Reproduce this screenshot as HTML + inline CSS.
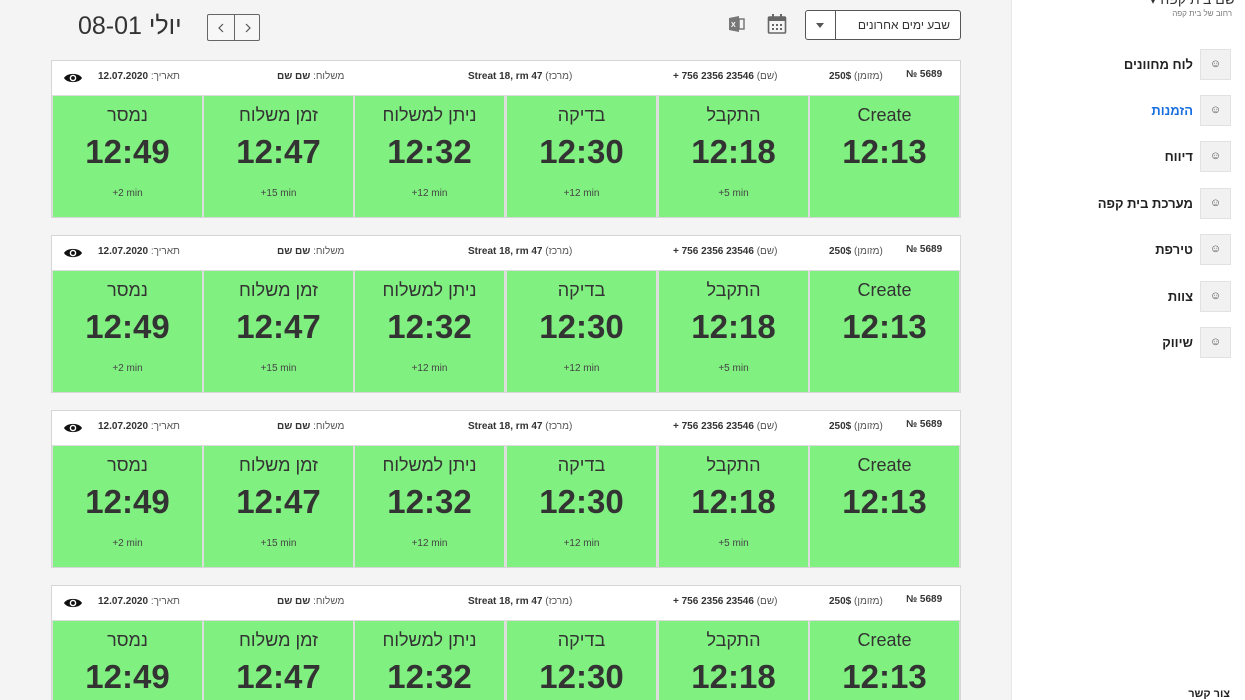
<!DOCTYPE html>
<html style="overflow:hidden;height:700px"><head><meta charset="utf-8">
<style>
*{margin:0;padding:0;box-sizing:border-box}
body{width:1245px;height:700px;overflow:hidden;background:#f4f4f4;font-family:"Liberation Sans","Noto Sans CJK JP",sans-serif;color:#333;position:relative}
.side{position:absolute;left:1011px;top:0;width:234px;height:700px;background:#fff;border-left:1px solid #e8e8e8}
.abs{position:absolute}
.card{position:absolute;left:51px;width:910px;height:158px;background:#ddd;border:1px solid #d6d6d6;overflow:hidden}
.hdr{position:absolute;left:0;top:0;width:908px;height:34px;background:#fff;font-size:10px;color:#555}
.hdr span{position:absolute;top:10px;white-space:nowrap;direction:rtl}
.hdr b{color:#333;unicode-bidi:isolate;direction:ltr}
.cell{position:absolute;top:35px;width:149px;height:121px;background:#80f080;text-align:center}
.cell .l{position:absolute;left:0;right:0;top:9px;font-size:18px;color:#333}
.cell .t{position:absolute;left:0;right:0;top:37px;font-size:33px;font-weight:bold;color:#333}
.cell .m{position:absolute;left:0;right:0;top:92px;font-size:10px;color:#444}
.mi{position:absolute;right:14px;width:31px;height:31px;background:#f1f1f1;border:1px solid #e2e2e2;font-size:11px;text-align:center;line-height:29px;color:#444}
.ml{position:absolute;right:52px;font-size:13px;font-weight:bold;color:#222;direction:rtl;white-space:nowrap}
</style></head><body>

<div class="abs" style="left:78px;top:12px;font-size:25px;color:#333;white-space:nowrap">08-01 יולי</div>
<div class="abs" style="left:207px;top:14px;width:53px;height:27px;border:1px solid #666;border-radius:2px;background:#f7f7f7">
 <div class="abs" style="left:26px;top:0;width:1px;height:25px;background:#666"></div>
 <svg class="abs" style="left:9px;top:8px" width="8" height="10" viewBox="0 0 8 10"><path d="M6 1L2 5l4 4" fill="none" stroke="#555" stroke-width="1.2"/></svg>
 <svg class="abs" style="left:36px;top:8px" width="8" height="10" viewBox="0 0 8 10"><path d="M2 1l4 4-4 4" fill="none" stroke="#555" stroke-width="1.2"/></svg>
</div>
<svg class="abs" style="left:728px;top:15px" width="18" height="18" viewBox="0 0 18 18"><path d="M1 3l10-2v16L1 15z" fill="#777"/><rect x="11" y="4" width="5" height="10" fill="none" stroke="#777" stroke-width="1.5"/><text x="3" y="12" font-size="7" fill="#fff" font-family="Liberation Sans" font-weight="bold">X</text></svg>
<svg class="abs" style="left:767px;top:13px" width="20" height="22" viewBox="0 0 20 22"><rect x="1.5" y="4" width="17" height="16" rx="1" fill="none" stroke="#666" stroke-width="1.6"/><rect x="1.5" y="4" width="17" height="4" fill="#666"/><rect x="5" y="1" width="2" height="5" fill="#666"/><rect x="13" y="1" width="2" height="5" fill="#666"/><g fill="#666"><rect x="5" y="11" width="2" height="2"/><rect x="9" y="11" width="2" height="2"/><rect x="13" y="11" width="2" height="2"/><rect x="5" y="15" width="2" height="2"/><rect x="9" y="15" width="2" height="2"/><rect x="13" y="15" width="2" height="2"/></g></svg>
<div class="abs" style="left:805px;top:10px;width:156px;height:30px;border:1px solid #555;border-radius:3px;background:#fff">
 <div class="abs" style="left:29px;top:0;width:1px;height:28px;background:#555"></div>
 <div class="abs" style="left:10px;top:12px;width:0;height:0;border-left:4px solid transparent;border-right:4px solid transparent;border-top:5px solid #555"></div>
 <div class="abs" style="right:10px;top:7px;font-size:12px;color:#333;direction:rtl;white-space:nowrap">שבע ימים אחרונים</div>
</div>

<div class="card" style="top:60px">
 <div class="hdr">
  <svg style="position:absolute;left:11px;top:10px" width="20" height="14" viewBox="0 0 20 14"><path d="M1 7C4 1.5 16 1.5 19 7C16 12.5 4 12.5 1 7z" fill="#111"/><circle cx="10" cy="7" r="3.3" fill="#fff"/><circle cx="10" cy="7" r="1.9" fill="#111"/></svg>
  <span style="left:46px">תאריך: <b>12.07.2020</b></span>
  <span style="left:225px">משלוח: <b>שם שם</b></span>
  <span style="left:416px">(מרכז) <b>Streat 18, rm 47</b></span>
  <span style="left:621px">(שם) <b>+ 756 2356 23546</b></span>
  <span style="left:777px">(מזומן) <b>250$</b></span>
  <span style="left:854px;top:8px;direction:ltr"><b>№ 5689</b></span>
 </div>
 <div class="cell" style="left:758px"><div class="l">Create</div><div class="t">12:13</div></div>
 <div class="cell" style="left:607px"><div class="l">התקבל</div><div class="t">12:18</div><div class="m">+5 min</div></div>
 <div class="cell" style="left:455px"><div class="l">בדיקה</div><div class="t">12:30</div><div class="m">+12 min</div></div>
 <div class="cell" style="left:303px"><div class="l">ניתן למשלוח</div><div class="t">12:32</div><div class="m">+12 min</div></div>
 <div class="cell" style="left:152px"><div class="l">זמן משלוח</div><div class="t">12:47</div><div class="m">+15 min</div></div>
 <div class="cell" style="left:1px"><div class="l">נמסר</div><div class="t">12:49</div><div class="m">+2 min</div></div>
</div>

<div class="card" style="top:235px">
 <div class="hdr">
  <svg style="position:absolute;left:11px;top:10px" width="20" height="14" viewBox="0 0 20 14"><path d="M1 7C4 1.5 16 1.5 19 7C16 12.5 4 12.5 1 7z" fill="#111"/><circle cx="10" cy="7" r="3.3" fill="#fff"/><circle cx="10" cy="7" r="1.9" fill="#111"/></svg>
  <span style="left:46px">תאריך: <b>12.07.2020</b></span>
  <span style="left:225px">משלוח: <b>שם שם</b></span>
  <span style="left:416px">(מרכז) <b>Streat 18, rm 47</b></span>
  <span style="left:621px">(שם) <b>+ 756 2356 23546</b></span>
  <span style="left:777px">(מזומן) <b>250$</b></span>
  <span style="left:854px;top:8px;direction:ltr"><b>№ 5689</b></span>
 </div>
 <div class="cell" style="left:758px"><div class="l">Create</div><div class="t">12:13</div></div>
 <div class="cell" style="left:607px"><div class="l">התקבל</div><div class="t">12:18</div><div class="m">+5 min</div></div>
 <div class="cell" style="left:455px"><div class="l">בדיקה</div><div class="t">12:30</div><div class="m">+12 min</div></div>
 <div class="cell" style="left:303px"><div class="l">ניתן למשלוח</div><div class="t">12:32</div><div class="m">+12 min</div></div>
 <div class="cell" style="left:152px"><div class="l">זמן משלוח</div><div class="t">12:47</div><div class="m">+15 min</div></div>
 <div class="cell" style="left:1px"><div class="l">נמסר</div><div class="t">12:49</div><div class="m">+2 min</div></div>
</div>

<div class="card" style="top:410px">
 <div class="hdr">
  <svg style="position:absolute;left:11px;top:10px" width="20" height="14" viewBox="0 0 20 14"><path d="M1 7C4 1.5 16 1.5 19 7C16 12.5 4 12.5 1 7z" fill="#111"/><circle cx="10" cy="7" r="3.3" fill="#fff"/><circle cx="10" cy="7" r="1.9" fill="#111"/></svg>
  <span style="left:46px">תאריך: <b>12.07.2020</b></span>
  <span style="left:225px">משלוח: <b>שם שם</b></span>
  <span style="left:416px">(מרכז) <b>Streat 18, rm 47</b></span>
  <span style="left:621px">(שם) <b>+ 756 2356 23546</b></span>
  <span style="left:777px">(מזומן) <b>250$</b></span>
  <span style="left:854px;top:8px;direction:ltr"><b>№ 5689</b></span>
 </div>
 <div class="cell" style="left:758px"><div class="l">Create</div><div class="t">12:13</div></div>
 <div class="cell" style="left:607px"><div class="l">התקבל</div><div class="t">12:18</div><div class="m">+5 min</div></div>
 <div class="cell" style="left:455px"><div class="l">בדיקה</div><div class="t">12:30</div><div class="m">+12 min</div></div>
 <div class="cell" style="left:303px"><div class="l">ניתן למשלוח</div><div class="t">12:32</div><div class="m">+12 min</div></div>
 <div class="cell" style="left:152px"><div class="l">זמן משלוח</div><div class="t">12:47</div><div class="m">+15 min</div></div>
 <div class="cell" style="left:1px"><div class="l">נמסר</div><div class="t">12:49</div><div class="m">+2 min</div></div>
</div>

<div class="card" style="top:585px;height:115px;border-bottom:none">
 <div class="hdr">
  <svg style="position:absolute;left:11px;top:10px" width="20" height="14" viewBox="0 0 20 14"><path d="M1 7C4 1.5 16 1.5 19 7C16 12.5 4 12.5 1 7z" fill="#111"/><circle cx="10" cy="7" r="3.3" fill="#fff"/><circle cx="10" cy="7" r="1.9" fill="#111"/></svg>
  <span style="left:46px">תאריך: <b>12.07.2020</b></span>
  <span style="left:225px">משלוח: <b>שם שם</b></span>
  <span style="left:416px">(מרכז) <b>Streat 18, rm 47</b></span>
  <span style="left:621px">(שם) <b>+ 756 2356 23546</b></span>
  <span style="left:777px">(מזומן) <b>250$</b></span>
  <span style="left:854px;top:8px;direction:ltr"><b>№ 5689</b></span>
 </div>
 <div class="cell" style="left:758px;height:80px"><div class="l">Create</div><div class="t">12:13</div></div>
 <div class="cell" style="left:607px;height:80px"><div class="l">התקבל</div><div class="t">12:18</div></div>
 <div class="cell" style="left:455px;height:80px"><div class="l">בדיקה</div><div class="t">12:30</div></div>
 <div class="cell" style="left:303px;height:80px"><div class="l">ניתן למשלוח</div><div class="t">12:32</div></div>
 <div class="cell" style="left:152px;height:80px"><div class="l">זמן משלוח</div><div class="t">12:47</div></div>
 <div class="cell" style="left:1px;height:80px"><div class="l">נמסר</div><div class="t">12:49</div></div>
</div>

<div class="side">
 <div class="abs" style="right:10px;top:-9px;font-size:14px;color:#333;direction:rtl;white-space:nowrap">שם בית קפה ▾</div>
 <div class="abs" style="right:13px;top:9px;font-size:8px;color:#777;direction:rtl;white-space:nowrap">רחוב של בית קפה</div>

 <div class="mi" style="top:49px">☺</div><div class="ml" style="top:57px">לוח מחוונים</div>
 <div class="mi" style="top:95px">☺</div><div class="ml" style="top:103px;color:#1a6fe0">הזמנות</div>
 <div class="mi" style="top:141px">☺</div><div class="ml" style="top:149px">דיווח</div>
 <div class="mi" style="top:188px">☺</div><div class="ml" style="top:196px">מערכת בית קפה</div>
 <div class="mi" style="top:234px">☺</div><div class="ml" style="top:242px">טירפת</div>
 <div class="mi" style="top:281px">☺</div><div class="ml" style="top:289px">צוות</div>
 <div class="mi" style="top:327px">☺</div><div class="ml" style="top:335px">שיווק</div>

 <div class="abs" style="right:15px;top:689px;font-size:11px;font-weight:bold;color:#222;direction:rtl;white-space:nowrap;line-height:11px;height:11px">צור קשר</div>
</div>
</body></html>
